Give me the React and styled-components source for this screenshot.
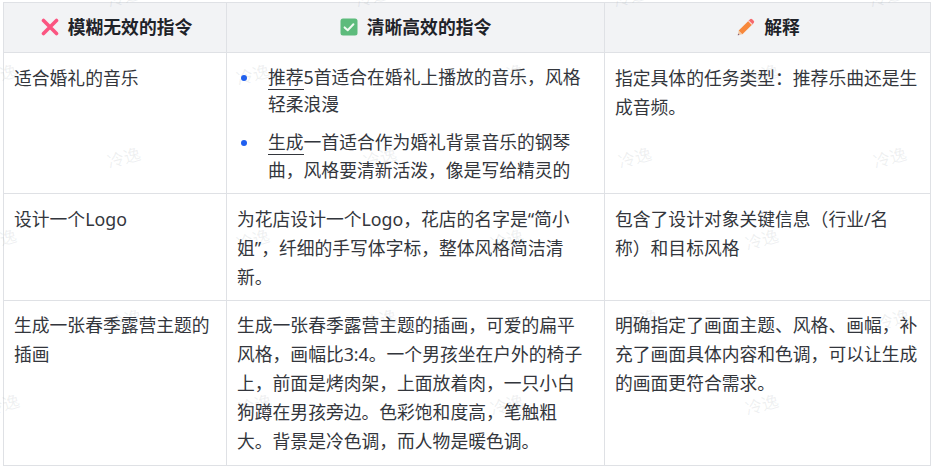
import React from "react";
import styled, { createGlobalStyle } from "styled-components";

const Global = createGlobalStyle`
  html, body { margin: 0; padding: 0; background: #fff; }
  body { font-family: "Noto Sans", "Noto Sans CJK SC", sans-serif; }
`;

const Page = styled.div`
  position: relative;
  width: 933px;
  height: 468px;
  overflow: hidden;
  padding: 2px 0 0 3px;
  box-sizing: border-box;
  background: #fff;
`;

const Table = styled.table`
  width: 927px;
  table-layout: fixed;
  border-collapse: collapse;
  font-size: 17.8px;
  line-height: 29px;
  color: #33363c;
  text-spacing-trim: space-all;
`;

const HeadCell = styled.th`
  height: 50px;
  padding: 2px 0 0 ${(p) => p.$nudge}px;
  box-sizing: border-box;
  background: #f2f3f5;
  border: 1.5px solid #dfe1e5;
  font-size: 17.8px;
  font-weight: 700;
  color: #1f2329;
  text-align: center;
`;

const HeadLabel = styled.span`
  display: inline-flex;
  align-items: center;
  justify-content: center;
  gap: 9px;
`;

const Cell = styled.td`
  padding: 10.5px ${(p) => (p.$wide ? 9 : 16)}px 8px 10px;
  border: 1.5px solid #dfe1e5;
  vertical-align: top;
  box-sizing: border-box;
  overflow: hidden;
`;

const ListCell = styled(Cell)`
  height: 141px;
`;

const LastCell = styled(Cell)`
  padding-bottom: 9px;
`;

const Bullets = styled.ul`
  margin: 0;
  padding: 0 0 0 31px;
  list-style: none;
`;

const Bullet = styled.li`
  position: relative;
  line-height: 27.5px;
  & + & { margin-top: 10.5px; }
  &::before {
    content: "";
    position: absolute;
    left: -27px;
    top: 11px;
    width: 6px;
    height: 6px;
    border-radius: 50%;
    background: #1f5ff0;
  }
`;

const Under = styled.span`
  border-bottom: 1px solid #33363c;
`;

const Watermarks = styled.div`
  position: absolute;
  inset: 0;
  pointer-events: none;
`;

const Mark = styled.span`
  position: absolute;
  transform: translate(-50%, -50%) rotate(-15deg);
  font-size: 17px;
  line-height: 20px;
  white-space: nowrap;
  color: rgba(120, 130, 140, 0.12);
`;

const CrossIcon = () => (
  <svg width="18" height="18" viewBox="0 0 18 18" aria-hidden="true">
    <path d="M2.5 2.5 L15.5 15.5 M15.5 2.5 L2.5 15.5" stroke="#fb5581" strokeWidth="3.6" strokeLinecap="round" />
  </svg>
);

const CheckIcon = () => (
  <svg width="18" height="18" viewBox="0 0 18 18" aria-hidden="true">
    <rect x="0.5" y="0.5" width="17" height="17" rx="2.5" fill="#5dbb7c" />
    <path d="M4.6 9.4 L7.7 12.3 L13.4 6.2" fill="none" stroke="#eefaf1" strokeWidth="2" strokeLinecap="round" strokeLinejoin="round" />
  </svg>
);

const PencilIcon = () => (
  <svg width="18" height="18" viewBox="0 0 18 18" aria-hidden="true">
    <path d="M0.8 17.2 L1.7 12.6 L5.4 16.3 Z" fill="#f3c9a5" />
    <path d="M0.8 17.2 L1.1 15.5 L2.5 16.9 Z" fill="#7a5a78" />
    <path d="M1.7 12.6 L11.6 2.7 L15.3 6.4 L5.4 16.3 Z" fill="#f7883c" />
    <path d="M11.6 2.7 L13 1.3 A1.6 1.6 0 0 1 15.2 1.3 L16.7 2.8 A1.6 1.6 0 0 1 16.7 5 L15.3 6.4 Z" fill="#f6686c" />
    <path d="M11 3.3 L11.9 2.4 L15.6 6.1 L14.7 7 Z" fill="#f9d3cf" />
  </svg>
);

const marks = [];
[[-3, [124, 372, 630, 886]], [75, [0, 253, 507, 762]], [158, [124, 380, 635, 890]], [240, [0, 253, 507, 762]], [320, [125, 380, 641, 893]], [405, [3, 255, 507, 762]]].forEach(([y, xs]) =>
  xs.forEach((x) => marks.push({ x, y }))
);

export default function App() {
  return (
    <Page>
      <Global />
      <Table>
        <colgroup>
          <col width="223" />
          <col width="378" />
          <col width="326" />
        </colgroup>
        <thead>
          <tr>
            <HeadCell $nudge={3}><HeadLabel><CrossIcon />模糊无效的指令</HeadLabel></HeadCell>
            <HeadCell $nudge={0}><HeadLabel><CheckIcon />清晰高效的指令</HeadLabel></HeadCell>
            <HeadCell $nudge={2}><HeadLabel><PencilIcon />解释</HeadLabel></HeadCell>
          </tr>
        </thead>
        <tbody>
          <tr>
            <ListCell>适合婚礼的音乐</ListCell>
            <ListCell>
              <Bullets>
                <Bullet><Under>推荐</Under>5首适合在婚礼上播放的音乐，风格轻柔浪漫</Bullet>
                <Bullet><Under>生成</Under>一首适合作为婚礼背景音乐的钢琴曲，风格要清新活泼，像是写给精灵的</Bullet>
              </Bullets>
            </ListCell>
            <ListCell $wide>指定具体的任务类型：推荐乐曲还是生成音频。</ListCell>
          </tr>
          <tr>
            <Cell>设计一个Logo</Cell>
            <Cell>为花店设计一个Logo，花店的名字是“简小姐”，纤细的手写体字标，整体风格简洁清新。</Cell>
            <Cell $wide>包含了设计对象关键信息（行业/名称）和目标风格</Cell>
          </tr>
          <tr>
            <LastCell>生成一张春季露营主题的插画</LastCell>
            <LastCell>生成一张春季露营主题的插画，可爱的扁平风格，画幅比3:4。一个男孩坐在户外的椅子上，前面是烤肉架，上面放着肉，一只小白狗蹲在男孩旁边。色彩饱和度高，笔触粗大。背景是冷色调，而人物是暖色调。</LastCell>
            <LastCell $wide>明确指定了画面主题、风格、画幅，补充了画面具体内容和色调，可以让生成的画面更符合需求。</LastCell>
          </tr>
        </tbody>
      </Table>
      <Watermarks>
        {marks.map((m) => (
          <Mark key={`${m.x}-${m.y}`} style={{ left: m.x, top: m.y }}>冷逸</Mark>
        ))}
      </Watermarks>
    </Page>
  );
}
